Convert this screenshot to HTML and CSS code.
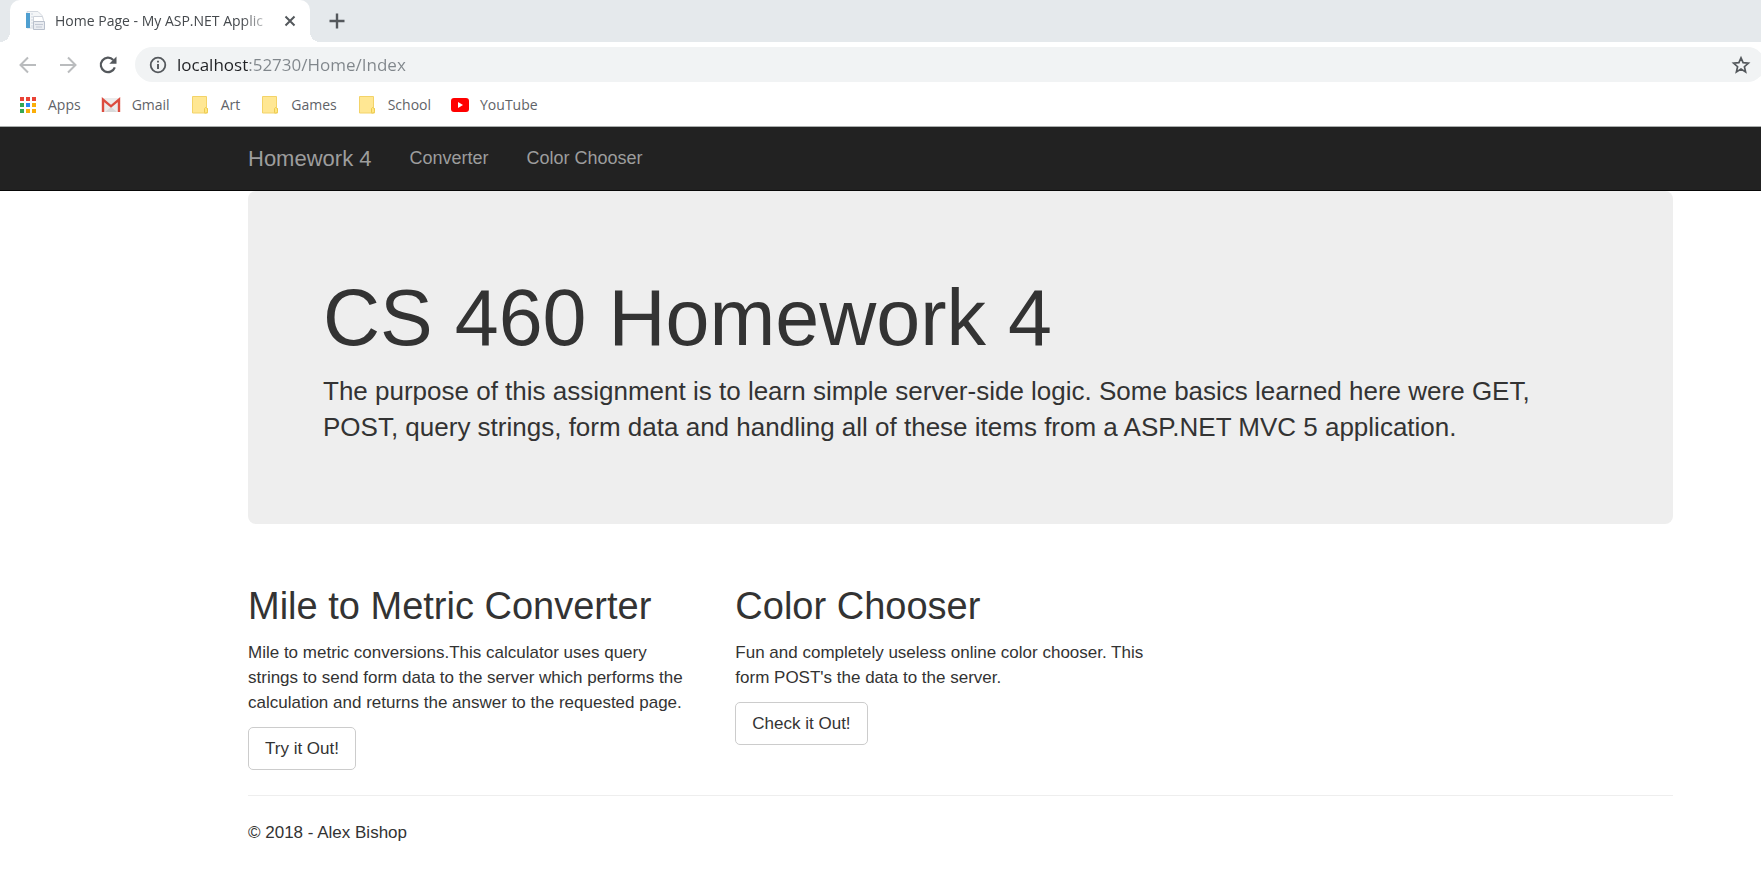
FILE: index.html
```html
<!DOCTYPE html>
<html lang="en">
<head>
<meta charset="utf-8">
<title>Home Page - My ASP.NET Application</title>
<link rel="stylesheet" href="styles.css">
</head>
<body>
<div class="browser">
  <div class="tab-strip">
    <div class="tab">
      <svg class="favicon" width="20" height="20" viewBox="0 0 20 20" aria-hidden="true">
        <path d="M2 .5h11l4 4V17H2z" fill="#f4f6f8" stroke="#d3d8df"/>
        <path d="M1 2h4v15H1z" fill="#4f9fd0"/>
        <path d="M6 3h2M6 6h2M6 9h2M6 12h2M6 15h2" stroke="#cfd6e0"/>
        <path d="M8.500 5.500h9l1 4v5h-10z" fill="#fff" stroke="#cdd2da"/>
        <path d="M8.500 10.500h11v8h-11z" fill="#e9ecf1" stroke="#b9c0cc"/>
        <path d="M10 13.500h8M11 16h6" stroke="#c3c9d4"/>
      </svg>
      <span class="tab-title">Home Page - My ASP.NET Applic</span>
      <button class="icon-button tab-close" aria-label="Close tab">
        <svg width="12" height="12" viewBox="0 0 12 12"><path d="M1.500 1.500l9 9M10.500 1.500l-9 9" stroke="#54585c" stroke-width="2" fill="none"/></svg>
      </button>
    </div>
    <button class="icon-button new-tab" aria-label="New tab">
      <svg width="16" height="16" viewBox="0 0 16 16"><path d="M8 .5v15M.5 8h15" stroke="#54585c" stroke-width="2.400" fill="none"/></svg>
    </button>
  </div>
  <div class="toolbar">
    <button class="icon-button" aria-label="Back">
      <svg width="20" height="20" viewBox="0 0 20 20"><path d="M18 10H3M10 2.500L2.500 10l7.500 7.500" stroke="#babcbe" stroke-width="2" fill="none"/></svg>
    </button>
    <button class="icon-button" aria-label="Forward">
      <svg width="20" height="20" viewBox="0 0 20 20"><path d="M2 10h15M10 2.500l7.500 7.500-7.500 7.500" stroke="#babcbe" stroke-width="2" fill="none"/></svg>
    </button>
    <button class="icon-button" aria-label="Reload">
      <svg width="20" height="20" viewBox="0 0 20 20"><path d="M16.800 12.300A7.200 7.200 0 1 1 15.300 5" stroke="#54585c" stroke-width="2.200" fill="none"/><path d="M18.500 1.500v7.200h-7.200z" fill="#54585c"/></svg>
    </button>
    <div class="address-bar">
      <svg width="18" height="18" viewBox="0 0 18 18" aria-hidden="true"><circle cx="9" cy="9" r="7.300" stroke="#54585c" stroke-width="1.800" fill="none"/><path d="M9 8v5M9 4.800v1.800" stroke="#54585c" stroke-width="1.900"/></svg>
      <input class="address-input" type="text" aria-label="Address" value="localhost:52730/Home/Index">
      <button class="icon-button" aria-label="Bookmark this page">
        <svg width="20" height="20" viewBox="0 0 20 20"><path d="M10 2.800l2.100 4.900 5.300.5-4 3.500 1.200 5.200-4.600-2.800-4.600 2.800 1.200-5.200-4-3.500 5.300-.5z" stroke="#54585c" stroke-width="1.700" fill="none"/></svg>
      </button>
    </div>
  </div>
  <nav class="bookmarks" aria-label="Bookmarks">
    <a class="bookmark" href="#"><svg width="18" height="18" viewBox="0 0 18 18" aria-hidden="true"><path d="M1 1h4v4H1zM7 1h4v4H7zM13 1h4v4h-4z" fill="#ea4335"/><path d="M1 7h4v4H1zM1 13h4v4H1z" fill="#34a853"/><path d="M7 7h4v4H7z" fill="#2a86f3"/><path d="M13 7h4v4h-4zM7 13h4v4H7zM13 13h4v4h-4z" fill="#fbae08"/></svg>Apps</a>
    <a class="bookmark" href="#"><svg width="20" height="18" viewBox="0 0 20 18" aria-hidden="true"><path d="M2 2h16v14H2z" fill="#ececec"/><path d="M4 16l6-5 6 5z" fill="#d9d9d9"/><path d="M2 16V3.500l8 6.800 8-6.800V16" stroke="#dc4c3f" stroke-width="2.400" fill="none"/></svg>Gmail</a>
    <a class="bookmark" href="#"><svg class="folder" width="18" height="20" viewBox="0 0 18 20" aria-hidden="true"><path d="M1.500 1.500h14v11l1 1.500v4H1.500z" fill="#ffe793" stroke="#f3d368"/><path d="M13.500 17.500v-4l1-1 2 1v3l-1 1.500h-2z" fill="#ffe680" stroke="#ecca50"/></svg>Art</a>
    <a class="bookmark" href="#"><svg class="folder" width="18" height="20" viewBox="0 0 18 20" aria-hidden="true"><path d="M1.500 1.500h14v11l1 1.500v4H1.500z" fill="#ffe793" stroke="#f3d368"/><path d="M13.500 17.500v-4l1-1 2 1v3l-1 1.500h-2z" fill="#ffe680" stroke="#ecca50"/></svg>Games</a>
    <a class="bookmark" href="#"><svg class="folder" width="18" height="20" viewBox="0 0 18 20" aria-hidden="true"><path d="M1.500 1.500h14v11l1 1.500v4H1.500z" fill="#ffe793" stroke="#f3d368"/><path d="M13.500 17.500v-4l1-1 2 1v3l-1 1.500h-2z" fill="#ffe680" stroke="#ecca50"/></svg>School</a>
    <a class="bookmark" href="#"><svg width="18" height="14" viewBox="0 0 18 14" aria-hidden="true"><rect width="18" height="14" rx="3" fill="#f00"/><path d="M7 4l5 3-5 3z" fill="#fff"/></svg>YouTube</a>
  </nav>
</div>
<header class="navbar">
  <nav class="container navbar-inner" aria-label="Main">
    <a class="brand" href="#">Homework 4</a>
    <a class="nav-link" href="#">Converter</a>
    <a class="nav-link" href="#">Color Chooser</a>
  </nav>
</header>
<div class="container">
  <main>
    <section class="jumbotron">
      <h1>CS 460 Homework 4</h1>
      <p>The purpose of this assignment is to learn simple server-side logic. Some basics learned here were GET, POST, query strings, form data and handling all of these items from a ASP.NET MVC 5 application.</p>
    </section>
    <div class="row">
      <section>
        <h2>Mile to Metric Converter</h2>
        <p>Mile to metric conversions.This calculator uses query strings to send form data to the server which performs the calculation and returns the answer to the requested page.</p>
        <a class="btn" href="#">Try it Out!</a>
      </section>
      <section>
        <h2>Color Chooser</h2>
        <p>Fun and completely useless online color chooser. This<br>form POST's the data to the server.</p>
        <a class="btn" href="#">Check it Out!</a>
      </section>
    </div>
  </main>
  <footer class="footer">
    <p>© 2018 - Alex Bishop</p>
  </footer>
</div>
</body>
</html>
```
FILE: styles.css
```css
* { box-sizing: border-box; }
body {
  margin: 0;
  background: #fff;
  color: #333;
  font: 17px/25px "Liberation Sans", Arial, sans-serif;
}
h1, h2, p { margin: 0; font-weight: 400; }
a { color: inherit; text-decoration: none; }
svg { display: block; flex: none; }

/* Browser window */
.browser {
  overflow: hidden;
  border-bottom: 1px solid #a9adac;
  color: #5f6368;
  font: 14px/20px "Open Sans", "Noto Sans", sans-serif;
}
.icon-button {
  display: flex;
  padding: 0;
  border: 0;
  background: none;
}
.tab-strip {
  display: flex;
  align-items: center;
  height: 42px;
  padding-left: 10px;
  background: #e5e9ec;
}
.tab {
  position: relative;
  display: flex;
  align-items: center;
  align-self: stretch;
  width: 300px;
  padding: 0 14px 0 15px;
  border-radius: 10px 10px 0 0;
  background: #fff;
}
.tab::before, .tab::after {
  content: "";
  position: absolute;
  bottom: 0;
  width: 10px;
  height: 10px;
}
.tab::before { right: 100%; background: radial-gradient(circle at 0 0, transparent 10px, #fff 10px); }
.tab::after { left: 100%; background: radial-gradient(circle at 100% 0, transparent 10px, #fff 10px); }
.tab-title {
  flex: 1;
  margin: 0 10px;
  white-space: nowrap;
  color: #45494d;
  mask-image: linear-gradient(to left, transparent, #000 32px);
}
.new-tab { margin-left: 19px; }
.toolbar {
  display: flex;
  align-items: center;
  gap: 20px;
  padding: 5px 0 0 18px;
}
.address-bar {
  display: flex;
  flex: 1;
  align-items: center;
  gap: 10px;
  height: 35px;
  margin: 0 -4px 0 -3px;
  padding: 0 14px;
  border-radius: 18px;
  background: #f1f3f4;
}
.address-input {
  flex: 1;
  padding: 0;
  border: 0;
  outline: 0;
  background: linear-gradient(to right, #202124 71px, #80868b 71px);
  background-clip: text;
  color: #80868b;
  -webkit-text-fill-color: transparent;
  font: 17px/24px "Open Sans", "Noto Sans", sans-serif;
}
.bookmarks {
  display: flex;
  align-items: center;
  gap: 20px;
  height: 44px;
  padding: 2px 0 0 19px;
}
.bookmark { display: flex; align-items: center; gap: 11px; }
.folder { margin: 0 1px; }

/* Page */
.container { padding: 0 88px 0 248px; }
.navbar {
  border-bottom: 1px solid #080808;
  background: #222;
  color: #9d9d9d;
  font-size: 18px;
}
.navbar-inner {
  display: flex;
  align-items: center;
  gap: 38px;
  height: 63px;
}
.brand { font-size: 22px; }
.jumbotron {
  padding: 87px 75px 79px;
  border-radius: 8px;
  background: #eee;
}
.jumbotron h1 { font-size: 79px; line-height: 80px; }
.jumbotron p { margin-top: 15px; font-size: 26px; line-height: 36px; }
.row {
  display: grid;
  grid-template-columns: repeat(3, 1fr);
  gap: 37px;
  margin-top: 61px;
}
.row h2 { margin-bottom: 13px; font-size: 38px; line-height: 42px; }
.btn {
  display: inline-block;
  margin-top: 12px;
  padding: 8px 16px;
  border: 1px solid #ccc;
  border-radius: 5px;
}
.footer {
  margin-top: 25px;
  padding-top: 24px;
  border-top: 1px solid #eee;
}
```
